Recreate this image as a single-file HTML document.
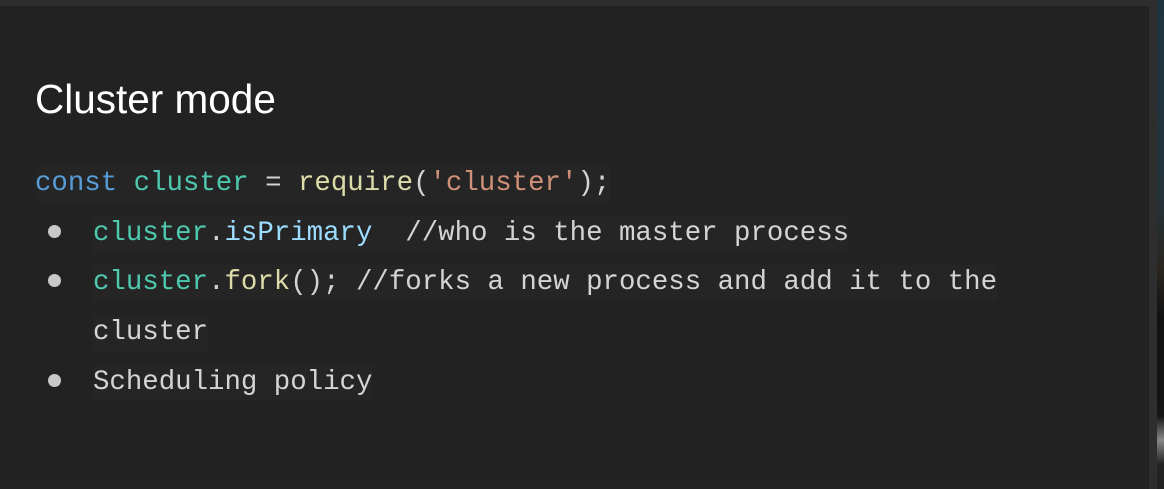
<!DOCTYPE html>
<html><head><style>
html,body{margin:0;padding:0;width:1164px;height:489px;overflow:hidden;background:#2e2e2e;}
.right{position:absolute;left:1157px;top:0;width:7px;height:489px;background:linear-gradient(#1d3440,#24333a 40%,#2a2520 55%,#111 65%,#151515 85%,#888 90%,#222 95%);}
.panel{position:absolute;left:0;top:6px;width:1149px;height:483px;background:#222222;}
h1{position:absolute;left:35px;top:75px;margin:0;font:40.5px/48px "Liberation Sans",sans-serif;color:#fff;font-weight:normal;}
.l{position:absolute;font:27.4px/36px "Liberation Mono",monospace;color:#d4d4d4;white-space:pre;background:#252525;}
.b{position:absolute;width:13px;height:13px;border-radius:50%;background:#c8c8c8;}
.k{color:#569cd6}.v{color:#4ec9b0}.f{color:#dcdcaa}.s{color:#ce9178}.p{color:#9cdcfe}
</style></head><body>
<div class="right"></div>
<div class="panel"></div>
<h1>Cluster mode</h1>
<div class="l" style="left:35px;top:166px"><span class="k">const</span> <span class="v">cluster</span> = <span class="f">require</span>(<span class="s">'cluster'</span>);</div>
<div class="b" style="left:48px;top:225px"></div>
<div class="l" style="left:93px;top:216px"><span class="v">cluster</span>.<span class="p">isPrimary</span>  //who is the master process</div>
<div class="b" style="left:48px;top:274px"></div>
<div class="l" style="left:93px;top:265px"><span class="v">cluster</span>.<span class="f">fork</span>(); //forks a new process and add it to the</div>
<div class="l" style="left:93px;top:315px">cluster</div>
<div class="b" style="left:48px;top:374px"></div>
<div class="l" style="left:93px;top:365px">Scheduling policy</div>
</body></html>
